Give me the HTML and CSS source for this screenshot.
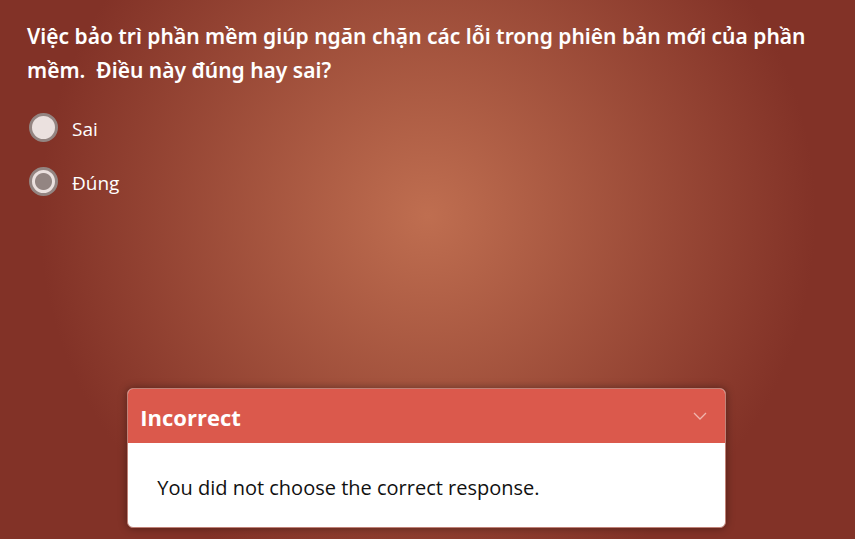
FILE: index.html
```html
<!DOCTYPE html>
<html lang="vi">
<head>
<meta charset="utf-8">
<meta name="viewport" content="width=device-width, initial-scale=1">
<title>Quiz</title>
<link rel="stylesheet" href="styles.css">
</head>
<body>
<main class="slide">
  <form class="quiz">
    <fieldset class="question">
      <legend class="prompt">Việc bảo trì phần mềm giúp ngăn chặn các lỗi trong phiên bản mới của phần mềm.&nbsp; Điều này đúng hay sai?</legend>
      <label class="choice"><input class="radio" type="radio" name="answer"><span class="choice-text">Sai</span></label>
      <label class="choice"><input class="radio" type="radio" name="answer" checked><span class="choice-text">Đúng</span></label>
    </fieldset>
  </form>
  <section class="feedback" lang="en">
    <header class="feedback-head">
      <h2 class="feedback-title">Incorrect</h2>
      <button class="collapse" type="button" aria-label="Collapse">
        <svg class="chevron" viewBox="0 0 14 8"><path d="M1 1l6 6 6-6"/></svg>
      </button>
    </header>
    <p class="feedback-text">You did not choose the correct response.</p>
  </section>
</main>
</body>
</html>
```
FILE: styles.css
```css
* {
  box-sizing: border-box;
}

body {
  margin: 0;
  color: #fff;
  font-family: "Open Sans", "Noto Sans", sans-serif;
}

.slide {
  display: flex;
  flex-direction: column;
  justify-content: space-between;
  min-height: 100vh;
  padding: 19px 29px 11px 27px;
  background: radial-gradient(circle at 50% 40%, #bf6e50 0, #823227 388px);
}

.question {
  display: flex;
  flex-direction: column;
  min-width: 0;
  margin: 0;
  padding: 0;
  border: 0;
}

.prompt {
  padding: 0;
  margin-bottom: 24px;
  font-family: "Noto Sans", "Open Sans", sans-serif;
  font-size: 21px;
  font-weight: 600;
  line-height: 34px;
}

.choice {
  display: flex;
  align-items: center;
  gap: 14px;
  height: 32px;
  margin-bottom: 22px;
  padding-left: 2px;
  font-size: 19px;
}

.choice-text {
  padding-top: 3px;
}

.radio {
  appearance: none;
  width: 29px;
  height: 29px;
  margin: 0;
  border: 3px solid #938582;
  border-radius: 50%;
  background: #ebe1df;
}

.radio:checked {
  background: radial-gradient(circle, #938582 0 8px, #ebe1df 9px);
}

.feedback {
  width: 70vw;
  margin: 0 auto;
  overflow: hidden;
  border: 1px solid #c08278;
  border-radius: 6px;
  background: #fff;
  box-shadow: 0 0 8px rgba(0, 0, 0, 0.4);
}

.feedback-head {
  display: flex;
  align-items: center;
  justify-content: space-between;
  height: 54px;
  padding: 2px 16px 0 12px;
  background: #db594c;
}

.feedback-title {
  margin: 0;
  font-size: 22px;
  font-weight: 700;
}

.collapse {
  display: flex;
  padding: 2px 2px 4px;
  border: 0;
  background: none;
  color: #f0b5ae;
}

.chevron {
  width: 14px;
  height: 8px;
  fill: none;
  stroke: currentColor;
  stroke-width: 1.3;
}

.feedback-text {
  margin: 0;
  padding: 30px 29px 24px;
  color: #111;
  font-size: 20px;
  line-height: 30px;
}
```
